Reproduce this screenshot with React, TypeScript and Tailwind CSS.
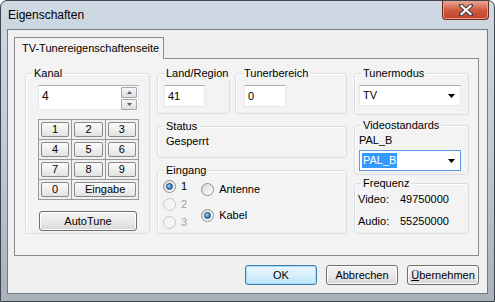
import React from "react";

function Group({ label, className, children }: { label: string; className?: string; children?: React.ReactNode }) {
  return (
    <div className={`relative rounded-[3px] border border-[#d5dfe5] shadow-[inset_1px_1px_0_#ffffff] ${className ?? ""}`}>
      <span className="absolute -top-[7px] left-[6px] bg-[#f3f3f3] px-[2px] leading-[13px] text-black">{label}</span>
      {children}
    </div>
  );
}

function TextBox({ value, className }: { value: string; className?: string }) {
  return (
    <div
      className={`flex items-center border border-[#e3e9ef] border-t-[#abadb3] bg-white pl-[3px] text-black ${className ?? ""}`}
    >
      {value}
    </div>
  );
}

function Combo({ value, focused }: { value: string; focused?: boolean }) {
  return (
    <div
      className={`flex h-[21px] w-[102px] items-center justify-between border bg-white pl-[2px] pr-[5px] ${
        focused ? "border-[#569de5]" : "border-[#e3e9ef] border-t-[#abadb3]"
      }`}
    >
      <span className={focused ? "bg-[#3399ff] px-[1px] leading-[15px] text-white" : "px-[1px] text-black"}>{value}</span>
      <svg width="7" height="4" viewBox="0 0 7 4">
        <path d="M0 0h7L3.5 4z" fill="#000" />
      </svg>
    </div>
  );
}

function Radio({ checked, disabled, label }: { checked?: boolean; disabled?: boolean; label: string }) {
  return (
    <div className="flex h-[18px] items-center gap-[5px]">
      <div
        className={`flex h-[13px] w-[13px] items-center justify-center rounded-full border ${
          disabled ? "border-[#c8c8c8] bg-[#f4f4f4]" : "border-[#8e8f8f] bg-gradient-to-br from-[#d9d9d9] to-[#ffffff]"
        }`}
      >
        {checked && (
          <div className="h-[7px] w-[7px] rounded-full border border-[#1a4e7e] bg-[radial-gradient(circle_at_35%_35%,#9cd3fb,#2a72b5_70%)]" />
        )}
      </div>
      <span className={disabled ? "text-[#a0a0a0]" : "text-black"}>{label}</span>
    </div>
  );
}

function Key({ label, wide }: { label: string; wide?: boolean }) {
  return (
    <div className={`bg-[#f0f0f0] p-[2px] ${wide ? "col-span-2" : ""}`}>
      <div className="flex h-[15px] items-center justify-center rounded-[2px] border border-[#8a8a8a] bg-gradient-to-b from-[#fbfbfb] to-[#e3e3e3] leading-none text-black">
        {label}
      </div>
    </div>
  );
}

function DlgButton({ children, primary }: { children: React.ReactNode; primary?: boolean }) {
  return (
    <div
      className={`flex h-[20px] w-[72px] items-center justify-center rounded-[3px] border text-black ${
        primary
          ? "border-[#3c7fb1] bg-gradient-to-b from-[#eaf6fd] via-[#d9f0fc] to-[#bee6fd] shadow-[inset_0_0_0_1px_#a7d9f5]"
          : "border-[#707070] bg-gradient-to-b from-[#f2f2f2] via-[#ebebeb] to-[#d6d6d6] shadow-[inset_0_0_0_1px_#fcfcfc]"
      }`}
    >
      {children}
    </div>
  );
}

export default function App() {
  return (
    <div
      className="flex h-[302px] w-[495px] flex-col overflow-hidden rounded-t-[7px] border border-[#3d4650] bg-gradient-to-b from-[#cfd9e4] via-[#bfcad6] to-[#a9b1b9] text-[11px]"
      style={{ fontFamily: '"Liberation Sans", Arial, sans-serif' }}
    >
      {/* title bar */}
      <div className="flex h-[28px] items-start justify-between pl-[7px]">
        <span className="mt-[6px] text-[12px] leading-[16px] text-black">Eigenschaften</span>
        <div className="mr-[5px] flex h-[19px] w-[47px] items-center justify-center rounded-b-[4px] border border-t-0 border-[#6b2a1e] bg-gradient-to-b from-[#e7a89a] via-[#cf5a3f] to-[#c3432a] shadow-[inset_0_0_0_1px_#e99c8a]">
          <svg width="14" height="12" viewBox="0 0 14 12">
            <path d="M2 1.5l10 9M12 1.5l-10 9" stroke="#3a3a3a" strokeWidth="4" strokeLinecap="square" />
            <path d="M2.5 2l9 8M11.5 2l-9 8" stroke="#ffffff" strokeWidth="2.2" strokeLinecap="square" />
          </svg>
        </div>
      </div>

      {/* client area */}
      <div className="mx-[6px] flex flex-col border border-[#6f7a86] bg-[#f0f0f0] pb-[8px] pl-[6px] pr-[8px] pt-[7px]">
        <div className="flex">
          <div className="relative z-10 -mb-px flex h-[22px] w-[150px] items-center border border-b-0 border-[#898c95] bg-[#f3f3f3] pl-[7px] text-black">
            TV-Tunereigenschaftenseite
          </div>
        </div>
        <div className="flex h-[198px] gap-[7px] border border-[#898c95] bg-[#f3f3f3] pl-[10px] pt-[14px]">
          {/* column 1 */}
          <Group label="Kanal" className="h-[161px] w-[125px]">
            <div className="flex flex-col pl-[12px] pt-[11px]">
              <div className="relative flex h-[25px] w-[101px] items-start border border-[#e3e9ef] border-t-[#abadb3] bg-white pl-[3px] pt-[3px] text-[12px] leading-[14px] text-black">
                4
                <div className="absolute right-[1px] top-[1px] flex flex-col gap-px">
                  <div className="flex h-[11px] w-[16px] items-center justify-center rounded-[1px] border border-[#a7a7a7] bg-gradient-to-b from-[#f6f6f6] to-[#dedede]">
                    <svg width="5" height="3" viewBox="0 0 5 3">
                      <path d="M0 3h5L2.5 0z" fill="#4a5d79" />
                    </svg>
                  </div>
                  <div className="flex h-[11px] w-[16px] items-center justify-center rounded-[1px] border border-[#a7a7a7] bg-gradient-to-b from-[#f6f6f6] to-[#dedede]">
                    <svg width="5" height="3" viewBox="0 0 5 3">
                      <path d="M0 0h5L2.5 3z" fill="#4a5d79" />
                    </svg>
                  </div>
                </div>
              </div>
              <div className="mt-[9px] grid w-[101px] grid-cols-3 gap-px border border-[#9a9a9a] bg-[#9a9a9a]">
                <Key label="1" />
                <Key label="2" />
                <Key label="3" />
                <Key label="4" />
                <Key label="5" />
                <Key label="6" />
                <Key label="7" />
                <Key label="8" />
                <Key label="9" />
                <Key label="0" />
                <Key label="Eingabe" wide />
              </div>
              <div className="ml-px mt-[11px] flex h-[20px] w-[98px] items-center justify-center rounded-[3px] border border-[#707070] bg-gradient-to-b from-[#f2f2f2] via-[#ebebeb] to-[#d6d6d6] text-black shadow-[inset_0_0_0_1px_#fcfcfc]">
                AutoTune
              </div>
            </div>
          </Group>

          {/* column 2 */}
          <div className="flex w-[190px] flex-col">
            <div className="flex gap-[5px]">
              <Group label="Land/Region" className="h-[41px] w-[73px]">
                <div className="pl-[6px] pt-[11px]">
                  <TextBox value="41" className="h-[22px] w-[41px]" />
                </div>
              </Group>
              <Group label="Tunerbereich" className="h-[41px] w-[112px]">
                <div className="pl-[8px] pt-[11px]">
                  <TextBox value="0" className="h-[22px] w-[42px]" />
                </div>
              </Group>
            </div>
            <Group label="Status" className="mt-[12px] h-[32px]">
              <div className="pl-[8px] pt-[8px] leading-[13px] text-black">Gesperrt</div>
            </Group>
            <Group label="Eingang" className="mt-[12px] h-[64px]">
              <div className="flex gap-[14px] pl-[5px] pt-[6px]">
                <div className="flex flex-col">
                  <Radio label="1" checked />
                  <Radio label="2" disabled />
                  <Radio label="3" disabled />
                </div>
                <div className="flex flex-col gap-[8px] pt-[3px]">
                  <Radio label="Antenne" />
                  <Radio label="Kabel" checked />
                </div>
              </div>
            </Group>
          </div>

          {/* column 3 */}
          <div className="flex w-[115px] flex-col">
            <Group label="Tunermodus" className="h-[42px]">
              <div className="pl-[4px] pt-[11px]">
                <Combo value="TV" />
              </div>
            </Group>
            <Group label="Videostandards" className="mt-[10px] h-[50px]">
              <div className="flex flex-col pl-[4px] pt-[8px]">
                <span className="leading-[13px] text-black">PAL_B</span>
                <div className="mt-[3px]">
                  <Combo value="PAL_B" focused />
                </div>
              </div>
            </Group>
            <Group label="Frequenz" className="mt-[8px] h-[51px]">
              <div className="flex flex-col gap-[9px] pl-[3px] pt-[9px] leading-[13px] text-black">
                <div className="flex">
                  <span className="w-[42px]">Video:</span>
                  <span>49750000</span>
                </div>
                <div className="flex">
                  <span className="w-[42px]">Audio:</span>
                  <span>55250000</span>
                </div>
              </div>
            </Group>
          </div>
        </div>

        <div className="mt-[9px] flex justify-end gap-[9px]">
          <DlgButton primary>OK</DlgButton>
          <DlgButton>Abbrechen</DlgButton>
          <DlgButton>
            <span>
              <span className="underline">Ü</span>bernehmen
            </span>
          </DlgButton>
        </div>
      </div>
    </div>
  );
}
